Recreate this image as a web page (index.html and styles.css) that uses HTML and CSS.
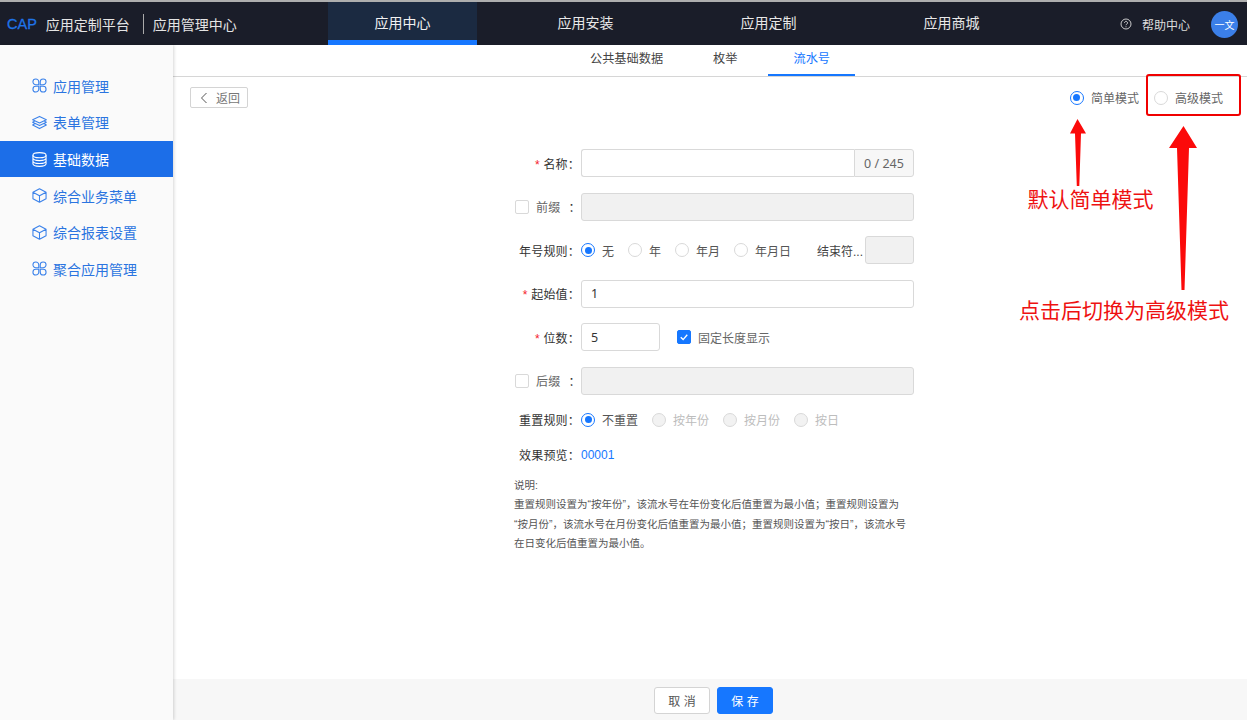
FILE: index.html
```html
<!DOCTYPE html>
<html lang="zh-CN">
<head>
<meta charset="utf-8">
<title>应用定制平台</title>
<link rel="stylesheet" href="styles.css">
</head>
<body>
<svg class="icon-defs" width="0" height="0" aria-hidden="true">
  <symbol id="i-clover" viewBox="0 0 16 16"><path d="M7.200 7.200H4.100a3.100 3.100 0 1 1 3.100-3.100zM8.800 7.200V4.100a3.100 3.100 0 1 1 3.100 3.100zM7.200 8.800v3.100a3.100 3.100 0 1 1-3.100-3.100zM8.800 8.800h3.100a3.100 3.100 0 1 1-3.100 3.100z" fill="none" stroke="currentColor" stroke-width="1.150"/></symbol>
  <symbol id="i-layers" viewBox="0 0 16 16"><path d="M8 1.500 15.300 5 8 8.500.7 5zM3.200 6.300.7 7.800 8 11.300l7.300-3.500-2.500-1.500M3.200 9.100.7 10.600 8 14.500l7.300-3.900-2.500-1.500" fill="none" stroke="currentColor" stroke-width="1.150" stroke-linejoin="round"/></symbol>
  <symbol id="i-db" viewBox="0 0 16 16"><ellipse cx="8" cy="3.400" rx="7" ry="2.700" fill="none" stroke="currentColor" stroke-width="1.150"/><path d="M1 3.400v9.200c0 1.500 3.100 2.700 7 2.700s7-1.200 7-2.700V3.400M1 6.500c0 1.500 3.100 2.700 7 2.700s7-1.200 7-2.700M1 9.600c0 1.500 3.100 2.700 7 2.700s7-1.200 7-2.700" fill="none" stroke="currentColor" stroke-width="1.150"/></symbol>
  <symbol id="i-cube" viewBox="0 0 16 16"><path d="M8 .8 15 4.500v7L8 15.200 1 11.500v-7zM1 4.500 8 8.200l7-3.700M8 8.200v7" fill="none" stroke="currentColor" stroke-width="1.150" stroke-linejoin="round"/></symbol>
</svg>

<header class="topbar">
  <div class="brand">
    <span class="brand-cap">CAP</span>
    <span class="brand-name">应用定制平台</span>
    <span class="brand-sep"></span>
    <span class="brand-name">应用管理中心</span>
  </div>
  <nav class="topnav">
    <a class="topnav-item topnav-active">应用中心</a>
    <a class="topnav-item">应用安装</a>
    <a class="topnav-item">应用定制</a>
    <a class="topnav-item">应用商城</a>
  </nav>
  <div class="top-right">
    <svg class="help-icon" viewBox="0 0 12 12"><circle cx="6" cy="6" r="5" fill="none" stroke="currentColor" stroke-width=".9"/><path d="M4.500 4.800a1.500 1.500 0 1 1 2.300 1.300c-.5.3-.8.6-.8 1.100" fill="none" stroke="currentColor" stroke-width=".9"/><circle cx="6" cy="8.800" r=".55" fill="currentColor"/></svg>
    <span class="help-text">帮助中心</span>
    <span class="avatar">一文</span>
  </div>
</header>

<div class="body-wrap">
  <aside class="sidebar">
    <a class="side-item"><svg class="side-icon"><use href="#i-clover"/></svg>应用管理</a>
    <a class="side-item"><svg class="side-icon"><use href="#i-layers"/></svg>表单管理</a>
    <a class="side-item side-active"><svg class="side-icon"><use href="#i-db"/></svg>基础数据</a>
    <a class="side-item"><svg class="side-icon"><use href="#i-cube"/></svg>综合业务菜单</a>
    <a class="side-item"><svg class="side-icon"><use href="#i-cube"/></svg>综合报表设置</a>
    <a class="side-item"><svg class="side-icon"><use href="#i-clover"/></svg>聚合应用管理</a>
  </aside>

  <main class="main">
    <div class="subtabs">
      <a class="subtab">公共基础数据</a>
      <a class="subtab">枚举</a>
      <a class="subtab subtab-active">流水号</a>
    </div>

    <div class="toolbar">
      <button class="back-btn"><svg class="back-icon" viewBox="0 0 8 12"><path d="M6.500 1 1.500 6l5 5" fill="none" stroke="currentColor" stroke-width="1"/></svg>返回</button>
      <div class="modes">
        <label class="radio radio-mode"><span class="dot dot-on"></span>简单模式</label>
        <label class="radio radio-mode"><span class="dot"></span>高级模式</label>
      </div>
    </div>

    <form class="form">
      <div class="row">
        <span class="label"><i class="req">*</i> 名称：</span>
        <div class="input-group"><span class="field field-grow"></span><span class="addon">0 / 245</span></div>
      </div>
      <div class="row">
        <span class="label label-check"><span class="check"></span><span class="muted">前缀</span><span class="colon">：</span></span>
        <span class="field field-grow field-off"></span>
      </div>
      <div class="row">
        <span class="label">年号规则：</span>
        <div class="radios radios-year">
          <label class="radio"><span class="dot dot-on"></span>无</label>
          <label class="radio"><span class="dot"></span>年</label>
          <label class="radio"><span class="dot"></span>年月</label>
          <label class="radio"><span class="dot"></span>年月日</label>
        </div>
        <span class="end-label">结束符...</span>
        <span class="field field-off field-end"></span>
      </div>
      <div class="row">
        <span class="label"><i class="req">*</i> 起始值：</span>
        <span class="field field-grow">1</span>
      </div>
      <div class="row">
        <span class="label"><i class="req">*</i> 位数：</span>
        <span class="field field-digits">5</span>
        <label class="fixed-len"><span class="check check-on"><svg viewBox="0 0 14 14"><path d="M3.200 7.200 6 10l4.800-5.600" fill="none" stroke="#fff" stroke-width="1.600"/></svg></span>固定长度显示</label>
      </div>
      <div class="row">
        <span class="label label-check"><span class="check"></span><span class="muted">后缀</span><span class="colon">：</span></span>
        <span class="field field-grow field-off"></span>
      </div>
      <div class="row row-reset">
        <span class="label">重置规则：</span>
        <div class="radios radios-reset">
          <label class="radio"><span class="dot dot-on"></span>不重置</label>
          <label class="radio radio-off"><span class="dot dot-off"></span>按年份</label>
          <label class="radio radio-off"><span class="dot dot-off"></span>按月份</label>
          <label class="radio radio-off"><span class="dot dot-off"></span>按日</label>
        </div>
      </div>
      <div class="row row-preview">
        <span class="label">效果预览：</span>
        <span class="preview">00001</span>
      </div>
      <p class="note">说明:<br>重置规则设置为“按年份”，该流水号在年份变化后值重置为最小值；重置规则设置为<br>“按月份”，该流水号在月份变化后值重置为最小值；重置规则设置为“按日”，该流水号<br>在日变化后值重置为最小值。</p>
    </form>

    <footer class="footer">
      <button class="btn">取 消</button>
      <button class="btn btn-primary">保 存</button>
    </footer>
  </main>
</div>

<div class="annot-box"></div>
<svg class="annot-arrows" viewBox="0 0 1247 720" aria-hidden="true">
  <path d="M1077.500 119 1086 133.500H1081L1079.300 186H1076.800L1075 133.500H1070Z" fill="#fb0a0a"/>
  <path d="M1183.500 126 1197 148H1189L1184.500 290H1181.500L1177 148H1169Z" fill="#fb0a0a"/>
</svg>
<span class="annot-text annot-simple">默认简单模式</span>
<span class="annot-text annot-switch">点击后切换为高级模式</span>
</body>
</html>
```
FILE: styles.css
```css
* { box-sizing: border-box; }
html, body { margin: 0; height: 720px; overflow: hidden; }
body {
  position: relative;
  display: flex;
  flex-direction: column;
  background: #fff;
  color: #333;
  font-family: "Liberation Sans", "Noto Sans CJK SC", sans-serif;
  font-size: 12px;
}
.icon-defs { position: absolute; }

/* top bar */
.topbar {
  flex: 0 0 45px;
  display: flex;
  align-items: stretch;
  background: #1a1d29;
  border-top: 2px solid #aeaeae;
  color: #e8e8e8;
}
.brand {
  width: 328px;
  display: flex;
  align-items: center;
  padding: 0 0 0 7px;
  font-size: 14px;
  color: #e4e4e4;
}
.brand-cap { color: #1f74e8; font-size: 14.5px; margin-right: 9px; -webkit-text-stroke: .3px #1f74e8; }
.brand-sep { width: 1px; height: 20px; background: #aaa; margin: 0 9px 0 13px; }
.topnav { display: flex; gap: 34px; }
.topnav-item {
  width: 149px;
  display: flex;
  align-items: center;
  justify-content: center;
  padding-top: 2px;
  font-size: 14px;
  color: #e8e8e8;
  border-bottom: 5px solid transparent;
}
.topnav-active { background: #1b2a41; border-bottom-color: #1677ff; color: #f2f2f2; }
.top-right {
  margin-left: auto;
  display: flex;
  align-items: center;
  padding: 1px 9px 0 0;
  font-size: 12px;
}
.help-icon { width: 12px; height: 12px; margin-right: 10px; margin-left: -3px; color: #ddd; }
.help-text { margin-right: 21px; color: #ddd; }
.avatar {
  width: 27px;
  height: 27px;
  border-radius: 50%;
  background: #3b7fe8;
  color: #fff;
  font-size: 10px;
  display: flex;
  align-items: center;
  justify-content: center;
}

/* layout */
.body-wrap { flex: 1; display: flex; min-height: 0; }
.sidebar {
  flex: 0 0 173px;
  padding-top: 22.6px;
  background: #fafafa;
  box-shadow: 1px 0 3px rgba(0,0,0,.16);
  position: relative;
  z-index: 1;
}
.side-item {
  height: 36.6px;
  display: flex;
  align-items: center;
  padding-left: 32px;
  font-size: 14px;
  color: #2a74e0;
}
.side-icon { width: 15px; height: 15px; margin-right: 6px; flex: none; color: #3b82ea; }
.side-active { background: #1c6ee8; color: #fff; }
.side-active .side-icon { color: #fff; }

.main { flex: 1; display: flex; flex-direction: column; min-width: 0; }
.subtabs {
  flex: 0 0 32px;
  display: flex;
  justify-content: center;
  border-bottom: 1px solid #d6d6d6;
  font-size: 12.2px;
  color: #444;
}
.subtab { padding: 0 25px 0; height: 31px; line-height: 28px; }
.subtab-active {
  margin-left: 6px;
  color: #1677ff;
  border-bottom: 2px solid #1677ff;
}

.toolbar {
  display: flex;
  justify-content: space-between;
  padding: 10px 24px 0 17px;
  height: 26px;
  flex: none;
  box-sizing: content-box;
}
.back-btn {
  width: 58px;
  height: 21px;
  padding: 0 0 0 9px;
  display: flex;
  align-items: center;
  background: #fff;
  border: 1px solid #d4d4d4;
  border-radius: 2px;
  font: inherit;
  font-size: 12px;
  color: #777;
}
.back-icon { width: 8px; height: 12px; margin-right: 8px; color: #555; }
.modes { display: flex; gap: 15px; }
.radio { display: inline-flex; align-items: center; color: #555; }
.radio-mode { font-size: 12px; color: #666; height: 21px; }
.dot {
  width: 14px;
  height: 14px;
  border-radius: 50%;
  border: 1px solid #d9d9d9;
  background: #fff;
  margin-right: 7px;
  flex: none;
  position: relative;
}
.dot-on { border-color: #1677ff; }
.dot-on::after {
  content: "";
  position: absolute;
  inset: 2.500px;
  border-radius: 50%;
  background: #1677ff;
}
.dot-off { background: #f2f2f2; }
.radio-off { color: #bdbdbd; }

/* form */
.form {
  width: 409px;
  margin: 36px 0 0 332px;
  display: flex;
  flex-direction: column;
  gap: 15.6px;
  flex: 1;
}
.row { display: flex; align-items: center; height: 28px; flex: none; }
.label {
  flex: 0 0 76px;
  padding-right: 1px;
  letter-spacing: .2px;
  text-align: right;
  color: #333;
  white-space: nowrap;
}
.req { color: #f5222d; font-style: normal; }
.label-check { display: flex; align-items: center; text-align: left; padding-left: 10px; }
.muted { margin-left: 7px; color: #666; }
.colon { margin-left: 8px; width: 12px; }
.check {
  width: 14px;
  height: 14px;
  border: 1px solid #d9d9d9;
  border-radius: 2px;
  background: #fff;
  flex: none;
  display: inline-flex;
}
.check-on { background: #1677ff; border-color: #1677ff; margin-right: 7px; }
.check-on svg { width: 12px; height: 12px; }
.field {
  height: 28px;
  border: 1px solid #d9d9d9;
  border-radius: 3px;
  background: #fff;
  display: flex;
  align-items: center;
  padding-left: 9px;
  font-size: 12.5px;
  font-family: "Noto Sans", "Noto Sans CJK SC", sans-serif;
  color: #333;
}
.field-grow { flex: 1; }
.field-off { background: #f1f1f1; }
.field-digits { width: 79px; }
.field-end { width: 49px; margin-left: auto; }
.input-group { flex: 1; display: flex; }
.input-group .field { border-radius: 3px 0 0 3px; border-right: 0; }
.addon {
  width: 60px;
  height: 28px;
  border: 1px solid #d9d9d9;
  border-radius: 0 3px 3px 0;
  background: #f7f7f7;
  display: flex;
  align-items: center;
  justify-content: center;
  font-family: "Noto Sans", "Noto Sans CJK SC", sans-serif;
  font-size: 12.5px;
  color: #666;
}
.radios { display: flex; align-items: center; }
.radios-year { gap: 14px; width: 236px; flex: none; }
.radios-reset { gap: 14px; }
.end-label { width: 48px; flex: none; color: #444; white-space: nowrap; }
.fixed-len { display: inline-flex; align-items: center; margin-left: 17px; color: #666; }
.row-reset { margin-top: -4.600px; }
.row-preview { margin-top: -8.600px; }
.preview { color: #1677ff; font-size: 12px; }
.note {
  margin: -8.600px 0 0 9px;
  font-size: 10.500px;
  line-height: 19.500px;
  color: #555;
  white-space: nowrap;
}

.footer {
  flex: 0 0 41px;
  display: flex;
  justify-content: center;
  align-items: center;
  gap: 7px;
  padding: 1px 0 0 7px;
  background: #f7f7f7;
}
.btn {
  width: 56px;
  height: 27px;
  border: 1px solid #d4d4d4;
  border-radius: 3px;
  background: #fff;
  color: #555;
  font: inherit;
  font-size: 12px;
}
.btn-primary { background: #1677ff; border-color: #1677ff; color: #fff; }

/* annotations drawn over the screenshot */
.annot-box {
  position: absolute;
  left: 1146px;
  top: 74px;
  width: 95px;
  height: 42px;
  border: 2px solid #f00000;
  border-radius: 3px;
}
.annot-arrows { position: absolute; left: 0; top: 0; width: 1247px; height: 720px; pointer-events: none; }
.annot-text {
  position: absolute;
  color: #ee1111;
  font-size: 21px;
  line-height: 28px;
  white-space: nowrap;
}
.annot-simple { left: 1027.500px; top: 186px; }
.annot-switch { left: 1019px; top: 297px; }
```
